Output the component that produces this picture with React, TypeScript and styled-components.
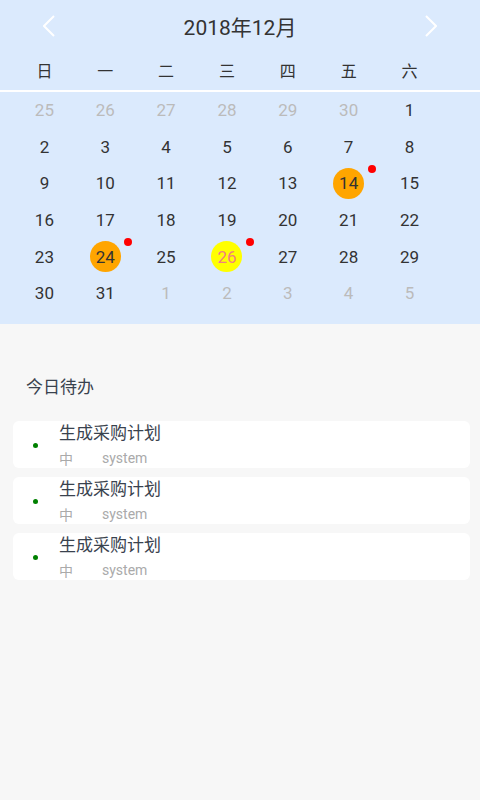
import React from "react";
import styled, { createGlobalStyle } from "styled-components";

const GlobalStyle = createGlobalStyle`
  body {
    margin: 0;
    background: #f7f7f7;
    font-family: Roboto, "Noto Sans CJK SC", sans-serif;
  }
`;

const Page = styled.div`
  width: 480px;
  min-height: 800px;
  background: #f7f7f7;
`;

const Calendar = styled.section`
  background: #dbeafd;
  padding-bottom: 12px;
`;

const Header = styled.div`
  height: 52px;
  display: flex;
  align-items: center;
  justify-content: space-between;
  padding: 0 38px;
  box-sizing: border-box;
`;

const Title = styled.h1`
  margin: 0;
  font-size: 21px;
  font-weight: 400;
  color: #333;
`;

const Arrow = styled.button`
  border: none;
  background: none;
  padding: 0;
  width: 22px;
  height: 24px;
  display: flex;
  align-items: center;
  justify-content: center;
`;

const Grid = styled.div`
  display: grid;
  grid-template-columns: repeat(7, 60.85px);
  padding-left: 14px;
`;

const WeekRow = styled(Grid)`
  height: 36px;
  padding-bottom: 2px;
  align-items: center;
  border-bottom: 2px solid #fff;
  font-size: 16px;
  color: #333;
`;

const WeekDay = styled.div`
  text-align: center;
  font-family: "Noto Sans CJK SC", sans-serif;
`;

const DateGrid = styled(Grid)`
  grid-auto-rows: 36.6px;
`;

const Cell = styled.div`
  position: relative;
  display: flex;
  align-items: center;
  justify-content: center;
`;

const Num = styled.span<{ $muted?: boolean; $mark?: "orange" | "yellow" }>`
  width: 31px;
  height: 31px;
  border-radius: 50%;
  display: flex;
  align-items: center;
  justify-content: center;
  font-size: 17px;
  color: ${(p) => (p.$muted ? "#bbb" : p.$mark === "yellow" ? "#f08080" : "#333")};
  background: ${(p) =>
    p.$mark === "orange" ? "#ffa500" : p.$mark === "yellow" ? "#ffff00" : "transparent"};
`;

const RedDot = styled.span`
  position: absolute;
  left: calc(50% + 19px);
  top: 0;
  width: 8px;
  height: 8px;
  border-radius: 50%;
  background: #ff0000;
`;

const Todo = styled.section`
  padding: 50px 10px 0 13px;
`;

const TodoTitle = styled.h2`
  margin: 0 0 23px 13px;
  font-size: 17px;
  line-height: 24px;
  font-weight: 400;
  color: #39424e;
  font-family: "Noto Sans CJK SC", sans-serif;
`;

const List = styled.div`
  display: flex;
  flex-direction: column;
  gap: 9px;
`;

const Card = styled.div`
  background: #fff;
  border-radius: 6px;
  height: 47px;
  display: flex;
  align-items: center;
`;

const GreenDot = styled.span`
  width: 5px;
  height: 5px;
  border-radius: 50%;
  background: #008000;
  margin: 2px 21px 0 20px;
  flex: none;
`;

const Body = styled.div`
  display: flex;
  flex-direction: column;
`;

const ItemName = styled.div`
  font-size: 17px;
  line-height: 22px;
  color: #39424e;
  font-family: "Noto Sans CJK SC", sans-serif;
`;

const Meta = styled.div`
  margin-top: 5px;
  display: flex;
  font-size: 14px;
  line-height: 20px;
  color: #aaa;
`;

const Level = styled.span`
  width: 43px;
  font-family: "Noto Sans CJK SC", sans-serif;
`;

type Day = { n: number; muted?: boolean; mark?: "orange" | "yellow"; dot?: boolean };

const days: Day[] = [
  ...[25, 26, 27, 28, 29, 30].map((n) => ({ n, muted: true })),
  ...Array.from({ length: 31 }, (_, i) => {
    const n = i + 1;
    const d: Day = { n };
    if (n === 14 || n === 24) {
      d.mark = "orange";
      d.dot = true;
    }
    if (n === 26) {
      d.mark = "yellow";
      d.dot = true;
    }
    return d;
  }),
  ...[1, 2, 3, 4, 5].map((n) => ({ n, muted: true })),
];

const weekdays = ["日", "一", "二", "三", "四", "五", "六"];

const Chevron = ({ dir }: { dir: "left" | "right" }) => (
  <svg width="12" height="22" viewBox="0 0 12 22">
    <path
      d={dir === "left" ? "M11 1 L1 11 L11 21" : "M1 1 L11 11 L1 21"}
      fill="none"
      stroke="#fff"
      strokeWidth="2"
    />
  </svg>
);

const App = (): JSX.Element => {
  return (
    <Page>
      <GlobalStyle />
      <Calendar>
        <Header>
          <Arrow>
            <Chevron dir="left" />
          </Arrow>
          <Title>2018年12月</Title>
          <Arrow>
            <Chevron dir="right" />
          </Arrow>
        </Header>
        <WeekRow>
          {weekdays.map((w) => (
            <WeekDay key={w}>{w}</WeekDay>
          ))}
        </WeekRow>
        <DateGrid>
          {days.map((d, i) => (
            <Cell key={i}>
              <Num $muted={d.muted} $mark={d.mark}>
                {d.n}
              </Num>
              {d.dot && <RedDot />}
            </Cell>
          ))}
        </DateGrid>
      </Calendar>
      <Todo>
        <TodoTitle>今日待办</TodoTitle>
        <List>
          {[0, 1, 2].map((i) => (
            <Card key={i}>
              <GreenDot />
              <Body>
                <ItemName>生成采购计划</ItemName>
                <Meta>
                  <Level>中</Level>
                  <span>system</span>
                </Meta>
              </Body>
            </Card>
          ))}
        </List>
      </Todo>
    </Page>
  );
};

export default App;
